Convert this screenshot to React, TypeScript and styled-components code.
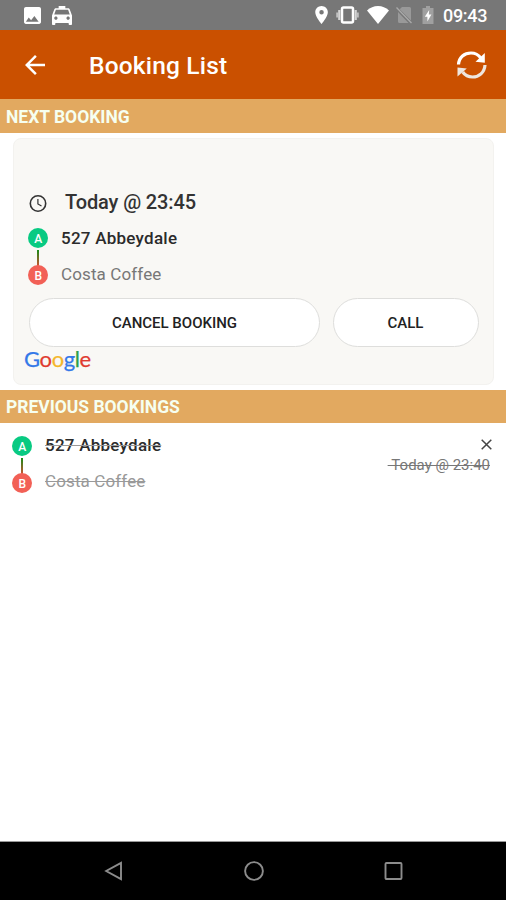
import React from 'react';
import styled, { createGlobalStyle } from 'styled-components';

const GlobalStyle = createGlobalStyle`
  *, *::before, *::after { box-sizing: border-box; }
  body {
    margin: 0;
    background: #fff;
    font-family: Roboto, "Liberation Sans", sans-serif;
  }
  svg { display: block; flex: none; }
`;

const Screen = styled.div`
  display: flex;
  flex-direction: column;
  width: 506px;
  height: 900px;
  overflow: hidden;
  background: #fff;
`;

const StatusBar = styled.header`
  display: flex;
  align-items: center;
  justify-content: space-between;
  height: 30px;
  padding: 0 19px 0 24px;
  background: #777;
  color: #fff;
`;

const IconGroup = styled.div<{ $gap: number }>`
  display: flex;
  align-items: center;
  gap: ${(p) => p.$gap}px;
`;

const StatusTime = styled.time`
  margin-left: 2px;
  width: 44px;
  font-size: 18px;
  font-weight: 500;
  line-height: 30px;
  letter-spacing: -0.3px;
  white-space: nowrap;
  padding-top: 2px;
`;

const AppBar = styled.div`
  display: flex;
  align-items: center;
  height: 69px;
  padding: 0 19px 0 25px;
  background: #ca5000;
  color: #fff;
`;

const Title = styled.h1`
  flex: 1;
  margin: 2px 0 0 44px;
  font-size: 24.5px;
  font-weight: 500;
  line-height: 30px;
  letter-spacing: 0.18px;
`;

const SectionHeader = styled.h2<{ $height: number }>`
  height: ${(p) => p.$height}px;
  margin: 0;
  padding: 1px 6px 0;
  background: #e2a960;
  color: #f6fff0;
  font-size: 17.5px;
  font-weight: 700;
  line-height: ${(p) => p.$height}px;
  letter-spacing: -0.02px;
  white-space: nowrap;
`;

const Card = styled.section`
  height: 247px;
  margin: 5px 12px 5px 13px;
  padding: 51px 15px 0;
  border: 1px solid #f3f2ef;
  border-radius: 8px;
  background: #f9f8f5;
`;

const TimeRow = styled.div`
  display: flex;
  align-items: center;
  gap: 18px;
  height: 26px;
  color: #333;
  font-size: 20px;
  font-weight: 500;
  letter-spacing: -0.12px;

  span {
    margin-top: -2px;
  }
`;

const Route = styled.div`
  display: grid;
  grid-template-columns: 20px auto;
  column-gap: 13px;
  align-items: start;
`;

const Stops = styled.div<{ $past?: boolean }>`
  margin-top: ${(p) => (p.$past ? -2 : -1)}px;
  color: ${(p) => (p.$past ? '#999' : '#777')};
  font-size: 17px;
  line-height: 22px;
  text-decoration: ${(p) => (p.$past ? 'line-through' : 'none')};
  text-decoration-thickness: 1px;
`;

const Pickup = styled.div`
  height: 36px;
  color: #2b2b2b;
  font-weight: 500;
  letter-spacing: 0.25px;
`;

const Dropoff = styled.div`
  height: 22px;
  letter-spacing: 0.12px;
`;

const CardRoute = styled(Route)`
  margin: 12px 0 0 -1px;
`;

const Actions = styled.div`
  display: grid;
  grid-template-columns: 291px 146px;
  gap: 12.5px;
  margin-top: 13px;
`;

const PillButton = styled.button`
  height: 49px;
  padding: 1px 0 0;
  border: 1px solid #dededc;
  border-radius: 25px;
  background: #fff;
  color: #222;
  font: 500 15px/46px Roboto, "Liberation Sans", sans-serif;
`;

const GoogleMark = styled.div`
  margin: -1px 0 0 -5px;
  font: 400 22px/26px Lato, sans-serif;
  letter-spacing: -0.4px;
`;

const Letter = styled.span<{ $color: string }>`
  color: ${(p) => p.$color};
  -webkit-text-stroke: 0.25px ${(p) => p.$color};
`;

const PreviousItem = styled.section`
  display: flex;
  justify-content: space-between;
  flex: 1;
  padding: 13px 14px 0 12px;
`;

const PastMeta = styled.div`
  display: flex;
  flex-direction: column;
  align-items: flex-end;
  gap: 5px;
  padding-top: 3px;
  color: #444;
`;

const PastTime = styled.time`
  padding-right: 2px;
  color: #777;
  font-size: 15px;
  line-height: 20px;
  white-space: pre;
  text-decoration: line-through;
  text-decoration-thickness: 1px;
`;

const NavBar = styled.nav`
  display: flex;
  align-items: center;
  justify-content: space-between;
  height: 59px;
  padding: 0 103px 0 104px;
  border-top: 1px solid #999;
  background: #000;
`;

const ImageIcon = () => (
  <svg width="17" height="17" viewBox="3 3 18 18" fill="currentColor">
    <path d="M21 19V5c0-1.100-.9-2-2-2H5c-1.100 0-2 .9-2 2v14c0 1.100.9 2 2 2h14c1.100 0 2-.9 2-2zM8 14l2.500 3 3.500-4.500 4.500 6H5z" />
  </svg>
);

const TaxiIcon = () => (
  <svg width="20" height="20" viewBox="3 2 18 19" fill="currentColor" preserveAspectRatio="none">
    <path d="M18.920 6.010C18.720 5.420 18.160 5 17.500 5H15V3H9v2H6.500c-.66 0-1.210.42-1.420 1.010L3 12v8c0 .55.45 1 1 1h1c.55 0 1-.45 1-1v-1h12v1c0 .55.45 1 1 1h1c.55 0 1-.45 1-1v-8l-2.080-5.990zM6.500 16c-.83 0-1.500-.67-1.500-1.500S5.670 13 6.500 13s1.500.67 1.500 1.500S7.330 16 6.500 16zm11 0c-.83 0-1.500-.67-1.500-1.500s.67-1.500 1.500-1.500 1.500.67 1.500 1.500-.67 1.500-1.500 1.500zM5 11l1.500-4.500h11L19 11H5z" />
  </svg>
);

const PlaceIcon = () => (
  <svg width="14" height="18" viewBox="5 2 15 20" fill="currentColor">
    <path d="M12 2C8.130 2 5 5.130 5 9c0 5.250 7 13 7 13s7-7.750 7-13c0-3.870-3.130-7-7-7zm0 9.500a2.500 2.500 0 0 1 0-5 2.500 2.500 0 0 1 0 5z" />
  </svg>
);

const VibrateIcon = () => (
  <svg width="24" height="20" viewBox="0 0 24 20" fill="none" stroke="currentColor">
    <rect x="6" y="2.500" width="11" height="15" rx="1.500" strokeWidth="2.500" />
    <path d="M3.300 5v10M19.700 5v10" strokeWidth="2.200" opacity=".7" />
    <path d="M1.100 7.500v5M21.900 7.500v5" strokeWidth="1.600" opacity=".6" />
  </svg>
);

const WifiIcon = () => (
  <svg width="22" height="18" viewBox="0 0 22 18" fill="currentColor">
    <path d="M11 18L0 4.500Q4.700 0 11 0T22 4.500z" />
  </svg>
);

const NoSimIcon = () => (
  <svg width="16" height="18" viewBox="0 0 16 18">
    <path d="M6 1h7.500q1.500 0 1.500 1.500v12L3.700 3.300zM2 6l10.500 11h-9Q2 17 2 15.500z" fill="#999" />
    <path d="M.5 1.500L15.500 17" stroke="#aaa" strokeWidth="1.300" />
  </svg>
);

const BatteryIcon = () => (
  <svg width="15" height="18" viewBox="-3.500 0 15 18">
    <path d="M3.500 0h4v2H11v16H0V2h3.500z" fill="#a0a0a0" />
    <path d="M6.700 4L2.300 10.700h2.600V15.500l4-7H6.300z" fill="#fff" />
  </svg>
);

const BackIcon = () => (
  <svg width="20" height="20" viewBox="4 4 16 16" fill="currentColor">
    <path d="M20 11H7.830l5.590-5.590L12 4l-8 8 8 8 1.410-1.410L7.830 13H20v-2z" />
  </svg>
);

const RefreshIcon = () => (
  <svg width="31" height="32" viewBox="0 0 31 32" fill="none">
    <path d="M2.500 15.500C3 8 8.500 4 15 4c4 0 7.300 1.500 9.800 5" stroke="#fff" strokeWidth="3.200" />
    <path d="M28.800 4v9.800l-9.300-1.100z" fill="#fff" />
    <path d="M29 16C28.500 23.500 23 28 16.500 28c-4 0-7.300-1.500-9.800-5" stroke="#eee6df" strokeWidth="3.200" />
    <path d="M1.500 27.500V18.500l9.300 1.100z" fill="#eee6df" />
  </svg>
);

const ClockIcon = () => (
  <svg width="18" height="18" viewBox="0 0 18 18" fill="none" stroke="#333">
    <circle cx="9" cy="9.500" r="7.700" strokeWidth="1.600" />
    <path d="M8.900 5v4.900l3.600 2.200" strokeWidth="1.200" />
  </svg>
);

const RouteMarkers = ({ id }: { id: string }) => (
  <svg width="20" height="57" viewBox="0 0 20 57" fontFamily="Roboto, sans-serif" fontSize="12" fontWeight="500" textAnchor="middle">
    <defs>
      <linearGradient id={id} x1="0" y1="0" x2="0" y2="1">
        <stop offset="0" stopColor="#168c16" />
        <stop offset="1" stopColor="#cc5230" />
      </linearGradient>
    </defs>
    <rect x="9" y="22" width="2" height="16" fill={`url(#${id})`} />
    <circle cx="10" cy="10" r="10" fill="#08ca82" />
    <circle cx="10" cy="47" r="10" fill="#f26056" />
    <text x="10.300" y="14.500" fill="#fff">A</text>
    <text x="10.300" y="51.500" fill="#fff">B</text>
  </svg>
);

const CloseIcon = () => (
  <svg width="11" height="11" viewBox="0 0 11 11" stroke="currentColor" strokeWidth="1.500">
    <path d="M.7.7l9.600 9.600M10.300.7L.7 10.300" />
  </svg>
);

const NavBack = () => (
  <svg width="19" height="20" viewBox="0 0 19 20" fill="none" stroke="#8c8c8c" strokeWidth="1.900">
    <path d="M17 1.800v16.400L2.200 10z" />
  </svg>
);

const NavHome = () => (
  <svg width="20" height="20" viewBox="0 0 20 20" fill="none" stroke="#8c8c8c" strokeWidth="1.900">
    <circle cx="10" cy="10" r="8.900" />
  </svg>
);

const NavRecent = () => (
  <svg width="19" height="18" viewBox="0 0 19 18" fill="none" stroke="#8c8c8c" strokeWidth="1.900">
    <rect x="1.500" y="1" width="16" height="16" rx="1" />
  </svg>
);

const GOOGLE_LETTERS: [string, string][] = [
  ['G', '#3478e8'],
  ['o', '#e03b30'],
  ['o', '#f4b62c'],
  ['g', '#3478e8'],
  ['l', '#2c9f4b'],
  ['e', '#e03b30'],
];

export default function App() {
  return (
    <>
      <GlobalStyle />
      <Screen>
        <StatusBar>
          <IconGroup $gap={11}>
            <ImageIcon />
            <TaxiIcon />
          </IconGroup>
          <IconGroup $gap={7}>
            <PlaceIcon />
            <VibrateIcon />
            <WifiIcon />
            <NoSimIcon />
            <BatteryIcon />
            <StatusTime>09:43</StatusTime>
          </IconGroup>
        </StatusBar>
        <AppBar>
          <BackIcon />
          <Title>Booking List</Title>
          <RefreshIcon />
        </AppBar>
        <SectionHeader $height={34}>NEXT BOOKING</SectionHeader>
        <Card>
          <TimeRow>
            <ClockIcon />
            <span>Today @ 23:45</span>
          </TimeRow>
          <CardRoute>
            <RouteMarkers id="next-route" />
            <Stops>
              <Pickup>527 Abbeydale</Pickup>
              <Dropoff>Costa Coffee</Dropoff>
            </Stops>
          </CardRoute>
          <Actions>
            <PillButton>CANCEL BOOKING</PillButton>
            <PillButton>CALL</PillButton>
          </Actions>
          <GoogleMark>
            {GOOGLE_LETTERS.map(([char, color], i) => (
              <Letter key={i} $color={color}>{char}</Letter>
            ))}
          </GoogleMark>
        </Card>
        <SectionHeader $height={33}>PREVIOUS BOOKINGS</SectionHeader>
        <PreviousItem>
          <Route>
            <RouteMarkers id="previous-route" />
            <Stops $past>
              <Pickup>527 Abbeydale</Pickup>
              <Dropoff>Costa Coffee</Dropoff>
            </Stops>
          </Route>
          <PastMeta>
            <CloseIcon />
            <PastTime>{'\u00a0Today @ 23:40'}</PastTime>
          </PastMeta>
        </PreviousItem>
        <NavBar>
          <NavBack />
          <NavHome />
          <NavRecent />
        </NavBar>
      </Screen>
    </>
  );
}
